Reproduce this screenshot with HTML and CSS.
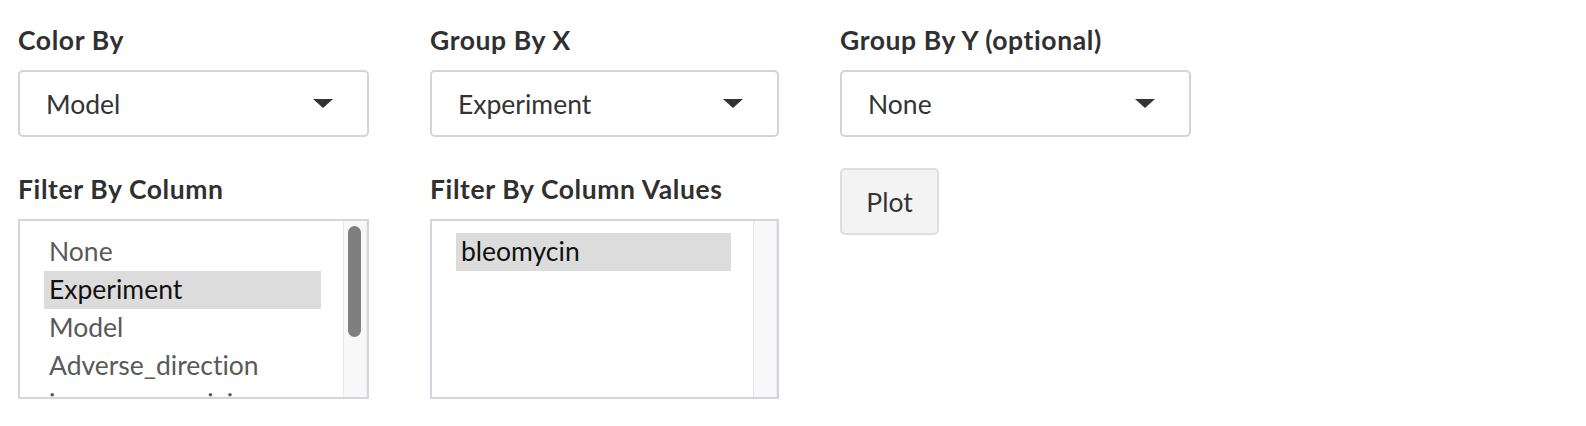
FILE: index.html
```html
<!DOCTYPE html>
<html lang="en">
<head>
<meta charset="utf-8">
<title>Plot controls</title>
<link rel="stylesheet" href="styles.css">
</head>
<body>
<div class="panel">
  <div class="field">
    <div class="label">Color By</div>
    <div class="select"><span class="value">Model</span><span class="caret"></span></div>
  </div>
  <div class="field">
    <div class="label">Group By X</div>
    <div class="select"><span class="value">Experiment</span><span class="caret"></span></div>
  </div>
  <div class="field">
    <div class="label">Group By Y (optional)</div>
    <div class="select"><span class="value">None</span><span class="caret"></span></div>
  </div>

  <div class="field">
    <div class="label">Filter By Column</div>
    <div class="listbox">
      <div class="options">
        <div class="option">None</div>
        <div class="option selected">Experiment</div>
        <div class="option">Model</div>
        <div class="option">Adverse_direction</div>
        <div class="option">ion_screen_mixing</div>
      </div>
      <div class="track"><div class="thumb"></div></div>
    </div>
  </div>
  <div class="field">
    <div class="label">Filter By Column Values</div>
    <div class="listbox">
      <div class="options">
        <div class="option selected">bleomycin</div>
      </div>
      <div class="track"></div>
    </div>
  </div>
  <div class="field">
    <button class="btn" type="button">Plot</button>
  </div>
</div>
</body>
</html>
```
FILE: styles.css
```css
html, body {
  margin: 0;
  padding: 0;
  background: #ffffff;
}

body {
  font-family: "Lato", "Liberation Sans", sans-serif;
  font-variant-ligatures: none;
  color: #333333;
}

.panel {
  display: grid;
  grid-template-columns: 351px 349px 351px;
  column-gap: 61px;
  row-gap: 31px;
  padding: 19px 0 0 18px;
  align-items: start;
}

.field {
  display: flex;
  flex-direction: column;
  gap: 8px;
}

.label {
  font-size: 26.5px;
  line-height: 43px;
  font-weight: 700;
  letter-spacing: 0.6px;
  color: #303030;
  white-space: nowrap;
}

.select {
  box-sizing: border-box;
  height: 67px;
  border: 2px solid #d4d4d4;
  border-radius: 5px;
  display: flex;
  align-items: center;
  justify-content: space-between;
  padding: 0 34px 0 26px;
  font-size: 26.5px;
  color: #333333;
}

.value {
  line-height: 1;
  padding-top: 2px;
}

.caret {
  width: 0;
  height: 0;
  border-left: 10px solid transparent;
  border-right: 10px solid transparent;
  border-top: 9px solid #333333;
  margin-top: -1px;
}

.listbox {
  box-sizing: border-box;
  height: 180px;
  border: 2px solid #d3d6df;
  display: flex;
  overflow: hidden;
}

.options {
  flex: 1;
  padding: 12px 22px 0 24px;
  overflow: hidden;
}

.option {
  height: 38px;
  line-height: 37px;
  font-size: 26.5px;
  padding-left: 5px;
  color: #595959;
  white-space: nowrap;
}

.option.selected {
  background: #dcdcdc;
  color: #111111;
}

.track {
  box-sizing: border-box;
  width: 24px;
  flex: none;
  background: #f8f8f8;
  border-left: 1px solid #e6e6e6;
  border-right: 1px solid #ececec;
  padding: 5px 0 0 4px;
}

.thumb {
  width: 13px;
  height: 111px;
  border-radius: 7px;
  background: #7f7f7f;
}

.btn {
  box-sizing: border-box;
  width: 99px;
  height: 67px;
  background: #f3f3f3;
  border: 2px solid #dedede;
  border-radius: 5px;
  font-family: "Lato", "Liberation Sans", sans-serif;
  font-size: 26.5px;
  color: #333333;
  padding: 0;
  align-self: flex-start;
}
```
